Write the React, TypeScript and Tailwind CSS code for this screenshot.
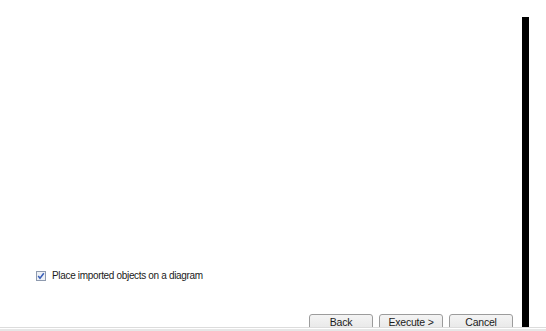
export default function App() {
  const buttons = ['Back', 'Execute >', 'Cancel'];

  return (
    <div className="w-[546px] h-[331px] bg-white flex flex-col overflow-hidden" style={{ fontFamily: '"Liberation Sans", Arial, sans-serif' }}>
      <div className="flex h-[327px] overflow-hidden">
        <div className="w-[522px] flex flex-col">
          <div className="flex-1" />
          <label className="flex items-center gap-[6px] pl-[36px] h-[10px] mb-[33px]">
            <span className="w-[10px] h-[10px] border border-[#8e9aae] bg-[#eef1f6] flex items-center justify-center">
              <svg width="8" height="8" viewBox="0 0 8 8">
                <path d="M1.2 4 L3 6.3 L6.8 1.2" fill="none" stroke="#3a5fb8" strokeWidth="1.5" />
              </svg>
            </span>
            <span className="text-[10px] tracking-[-0.33px] text-[#1a1a1a] leading-none">Place imported objects on a diagram</span>
          </label>
          <div className="flex gap-[6px] pl-[309px] h-[13px]">
            {buttons.map((b) => (
              <button
                key={b}
                className="w-[64px] h-[23px] shrink-0 rounded-[3px] border border-[#9c9c9c] bg-gradient-to-b from-[#f4f4f4] to-[#e2e2e2] text-[10.5px] tracking-[-0.2px] text-[#1a1a1a] pt-[2px] leading-none flex justify-center"
              >
                {b}
              </button>
            ))}
          </div>
        </div>
        <div className="w-[7px] bg-black mt-[17px]" />
      </div>
      <div className="h-px bg-[#dcdcdc]" />
      <div className="h-px bg-white" />
      <div className="flex-1 bg-[#e6e6e6]" />
    </div>
  );
}
